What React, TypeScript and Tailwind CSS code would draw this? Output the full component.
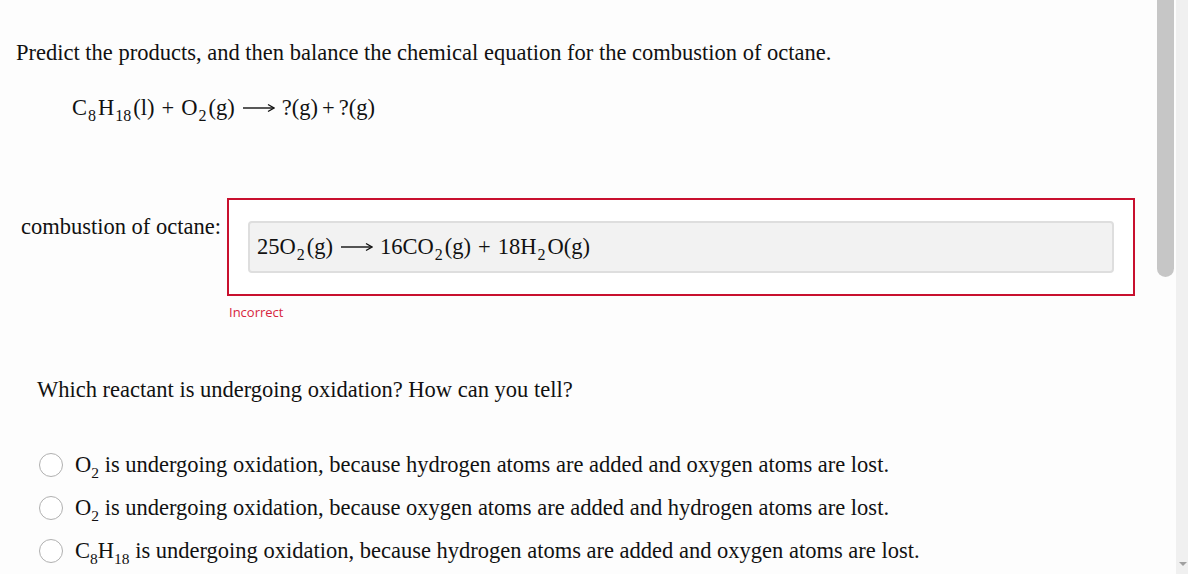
import React from "react";

const serif = { fontFamily: '"Liberation Serif", "Times New Roman", serif' };

const Arrow = () => (
  <span className="inline-block ml-[8px] mr-[7px]">
    <svg width="32" height="10" viewBox="0 0 32 10" className="block">
      <line x1="0" y1="5" x2="30" y2="5" stroke="#111" strokeWidth="1.4" />
      <path d="M25 1.5 L31 5 L25 8.5" fill="none" stroke="#111" strokeWidth="1.3" />
    </svg>
  </span>
);

const Sub = ({ children, tight }: { children: React.ReactNode; tight?: boolean }) => (
  <span className={tight ? "text-[15.5px] leading-none relative top-[6px]" : "text-[16px] leading-none relative top-[6px] ml-[1px] mr-[2px]"}>
    {children}
  </span>
);

const Plus = ({ narrow }: { narrow?: boolean }) => <span className={narrow ? "mx-[4px]" : "mx-[7px]"}>+</span>;

const Radio = () => (
  <span className="w-[24px] h-[24px] rounded-full border-[1.5px] border-[#b0b0b0] bg-white shrink-0" />
);

const options = [
  { formula: <>O<Sub tight>2</Sub></>, text: "is undergoing oxidation, because hydrogen atoms are added and oxygen atoms are lost." },
  { formula: <>O<Sub tight>2</Sub></>, text: "is undergoing oxidation, because oxygen atoms are added and hydrogen atoms are lost." },
  { formula: <>C<Sub tight>8</Sub>H<Sub tight>18</Sub></>, text: "is undergoing oxidation, because hydrogen atoms are added and oxygen atoms are lost." },
];

export default function App() {
  return (
    <div className="relative w-[1188px] h-[574px] overflow-hidden bg-[#fdfdfd] text-[#111] text-[22.5px]" style={serif}>
      <div className="pr-[40px]">
        {/* Question 1 */}
        <div className="pl-[16px] pt-[39px] leading-[28px]">
          Predict the products, and then balance the chemical equation for the combustion of octane.
        </div>
        <div className="pl-[72px] pt-[27px] leading-[28px] flex items-center">
          <span>C<Sub>8</Sub>H<Sub>18</Sub>(l)<Plus />O<Sub>2</Sub>(g)</span>
          <Arrow />
          <span>?(g)<Plus narrow />?(g)</span>
        </div>

        {/* Answer */}
        <div className="flex items-start mt-[76px]">
          <div className="pl-[21px] w-[227px] pt-[16px] leading-[26px] whitespace-nowrap">combustion of octane:</div>
          <div>
            <div className="w-[908px] h-[98px] border-2 border-[#c8102e] bg-white px-[19px] pt-[21px]">
              <div className="h-[52px] rounded-[4px] border-2 border-[#dedede] bg-[#f2f2f2] flex items-center pl-[7px]">
                <span>25O<Sub>2</Sub>(g)</span>
                <Arrow />
                <span>16CO<Sub>2</Sub>(g)<Plus />18H<Sub>2</Sub>O(g)</span>
              </div>
            </div>
            <div className="pl-[2px] pt-[7px] text-[13px] text-[#d7263d]" style={{ fontFamily: '"Open Sans", sans-serif' }}>
              Incorrect
            </div>
          </div>
        </div>

        {/* Question 2 */}
        <div className="pl-[37px] mt-[53px] leading-[28px]">
          Which reactant is undergoing oxidation? How can you tell?
        </div>
        <div className="pl-[39px] mt-[47px] flex flex-col gap-[14px]">
          {options.map((o, i) => (
            <div key={i} className="flex items-center gap-[12px] h-[29px]">
              <Radio />
              <span className="whitespace-nowrap">
                {o.formula} {o.text}
              </span>
            </div>
          ))}
        </div>
      </div>

      {/* scrollbars */}
      <div className="absolute top-0 right-[14px] w-[17px] h-[277px] bg-[#c6c6c6] rounded-b-full" />
      <div className="absolute top-0 right-0 w-[12px] h-full bg-[#f0f0f0]">
        <div className="absolute bottom-[8px] left-[3px] w-0 h-0 border-l-[4px] border-r-[4px] border-t-[4px] border-l-transparent border-r-transparent border-t-[#a0a0a0]" />
      </div>
    </div>
  );
}
